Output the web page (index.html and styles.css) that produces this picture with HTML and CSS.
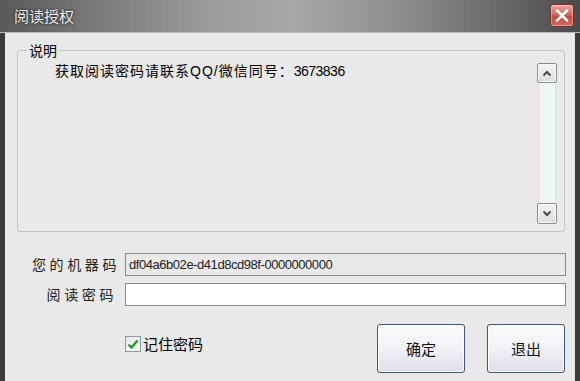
FILE: index.html
```html
<!DOCTYPE html>
<html lang="zh-CN">
<head>
<meta charset="utf-8">
<title>阅读授权</title>
<link rel="stylesheet" href="styles.css">
</head>
<body>
<div class="window">
  <div class="titlebar">
    <span class="title">阅读授权</span>
    <button class="close" aria-label="关闭">
      <svg width="14" height="13" viewBox="0 0 14 13"><path d="M2 1.5 L12 11.5 M12 1.5 L2 11.5" stroke="#fff" stroke-width="2.6" stroke-linecap="round" fill="none"/></svg>
    </button>
  </div>
  <div class="client">
    <fieldset class="group">
      <legend>说明</legend>
      <div class="group-body">
        <div class="desc">获取阅读密码请联系QQ/微信同号：<span class="num">3673836</span></div>
        <div class="scrollbar">
          <div class="sb-btn up"><svg width="10" height="7" viewBox="0 0 10 7"><path d="M1.5 5.5 L5 2 L8.5 5.5" stroke="#4a4a4a" stroke-width="2" fill="none"/></svg></div>
          <div class="sb-track"></div>
          <div class="sb-btn down"><svg width="10" height="7" viewBox="0 0 10 7"><path d="M1.5 1.5 L5 5 L8.5 1.5" stroke="#4a4a4a" stroke-width="2" fill="none"/></svg></div>
        </div>
      </div>
    </fieldset>
    <div class="form">
      <label class="lbl">您的机器码</label>
      <div class="field readonly">df04a6b02e-d41d8cd98f-0000000000</div>
      <label class="lbl lbl-short">阅读密码</label>
      <div class="field"></div>
      <div class="spacer"></div>
      <div class="actions">
        <label class="remember"><span class="check"><svg width="12" height="11" viewBox="0 0 12 11"><path d="M1.5 5.5 L4.5 8.5 L10.5 1.5" stroke="#22a022" stroke-width="2.4" fill="none"/></svg></span>记住密码</label>
        <button class="btn ok">确定</button>
        <button class="btn quit">退出</button>
      </div>
    </div>
  </div>
</div>
</body>
</html>
```
FILE: styles.css
```css
* { box-sizing: border-box; }
html, body { margin: 0; padding: 0; }
body {
  width: 580px;
  height: 381px;
  overflow: hidden;
  background: #3a3a3a;
  font-family: "Noto Sans CJK SC", "Liberation Sans", sans-serif;
  color: #000;
}
.window {
  width: 580px;
  height: 381px;
  display: flex;
  flex-direction: column;
}
.titlebar {
  height: 33px;
  flex: none;
  display: flex;
  justify-content: space-between;
  align-items: flex-start;
  background: linear-gradient(90deg, #5a5a5a 0%, #777 15%, #9a9a9a 35%, #a8a8a8 50%, #8c8c8c 70%, #666 88%, #4a4a4a 100%);
  border-bottom: 1px solid #b8b8b8;
}
.title {
  padding: 7px 0 0 14px;
  font-size: 15px;
  line-height: 18px;
  color: #f2f2f2;
  text-shadow: 0 0 2px #222, 0 0 3px rgba(0,0,0,.6);
}
.close {
  width: 24px;
  height: 23px;
  margin: 4px 6px 0 0;
  padding: 0;
  border: 1px solid #7e2a22;
  border-radius: 3px;
  background: linear-gradient(#eea59b, #d8685c 45%, #c8463a 55%, #d46a5a);
  box-shadow: inset 0 0 0 1px rgba(255,255,255,.35);
  display: flex;
  align-items: center;
  justify-content: center;
}
.client {
  flex: 1;
  background: #e9e9e9;
  border-left: 5px solid #3c3c3c;
  border-right: 5px solid #3c3c3c;
  padding: 9px 10px 0 12px;
}
.group {
  margin: 0;
  padding: 0;
  border: 1px solid #c4c4c4;
  border-radius: 3px;
  min-width: 0;
}
.group legend {
  margin-left: 9px;
  padding: 0 2px;
  font-size: 14px;
  line-height: 17px;
}
.group-body {
  display: flex;
  height: 172px;
  padding: 4px 7px 7px 37px;
}
.desc {
  flex: 1;
  font-family: "Liberation Sans", "Noto Sans CJK SC", sans-serif;
  font-size: 14px;
  line-height: 17px;
  letter-spacing: 1px;
}
.desc .num { letter-spacing: -0.5px; }
.scrollbar {
  width: 20px;
  display: flex;
  flex-direction: column;
}
.sb-btn {
  height: 20px;
  flex: none;
  border: 1px solid #8c8c8c;
  border-radius: 2px;
  background: linear-gradient(#f4f4f4, #dcdcdc);
  box-shadow: inset 0 0 0 1px #fafafa;
  display: flex;
  align-items: center;
  justify-content: center;
}
.sb-btn.down { height: 21px; }
.sb-track {
  flex: 1;
  margin: 0 1px;
  background: linear-gradient(90deg, #eaf3f7, #f4fafc);
  border-left: 1px solid #f0dfc6;
  border-right: 1px solid #f0dfc6;
}
.form {
  margin-top: 21px;
  margin-right: -1px;
  display: grid;
  grid-template-columns: 103px 1fr;
  column-gap: 5px;
  row-gap: 7px;
}
.lbl {
  font-size: 14px;
  line-height: 23px;
  letter-spacing: 3.6px;
  text-align: right;
  color: #222;
}
.lbl-short { padding-right: 3px; }
.field {
  height: 23px;
  border: 1px solid #8a8a8a;
  background: #fff;
  padding-left: 3px;
  font-family: "Liberation Sans", "DejaVu Sans", sans-serif;
  font-size: 13px;
  letter-spacing: -0.45px;
  line-height: 21px;
  color: #222;
}
.field.readonly { background: #e9e9e9; }
.actions {
  margin-top: 11px;
  display: flex;
  align-items: flex-start;
}
.remember {
  margin-top: 12px;
  display: flex;
  align-items: center;
  gap: 2px;
  font-size: 15px;
  line-height: 16px;
}
.check {
  width: 16px;
  height: 16px;
  border: 1px solid #8e9aa6;
  background: linear-gradient(135deg, #e4e8ec, #fff);
  display: flex;
  align-items: center;
  justify-content: center;
}
.btn {
  height: 49px;
  padding: 0;
  border: 1px solid #3d5878;
  border-radius: 3px;
  background: linear-gradient(#fcfcfe, #f1f1f7 50%, #dedde9);
  box-shadow: inset 0 0 0 1px #fff;
  font-family: "Noto Sans CJK SC", sans-serif;
  font-size: 15px;
  color: #111;
}
.ok { width: 88px; margin-left: auto; }
.quit { width: 78px; margin-left: 22px; margin-right: 1px; }
```
